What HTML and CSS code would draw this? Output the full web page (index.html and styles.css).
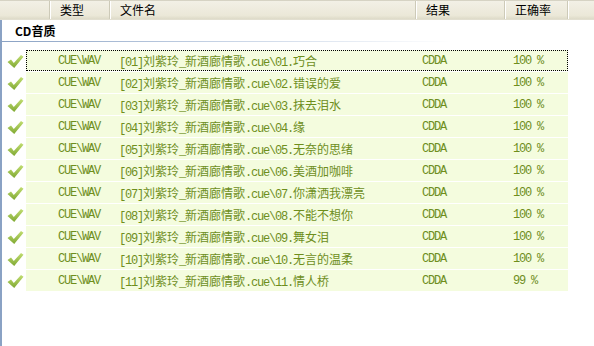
FILE: index.html
```html
<!DOCTYPE html>
<html>
  <head>
    <meta charset="utf-8">
    <title>CD音质</title>
    <link rel="stylesheet" href="styles.css">
  </head>
  <body>
    <svg class="defs" width="0" height="0"><defs><linearGradient id="g" x1="0" y1="0" x2="0" y2="1"><stop offset="0" stop-color="#c2de72"/><stop offset="1" stop-color="#7fa832"/></linearGradient></defs></svg>
    <div class="head">
      <div class="hcell hIcon"></div>
      <div class="hcell hType">类型</div>
      <div class="hcell hName">文件名</div>
      <div class="hcell hRes">结果</div>
      <div class="hcell hRate">正确率</div>
      <div class="hcell hRest"></div>
    </div>
    <div class="panel">
      <h3 class="groupName">CD音质</h3>
      <ul class="trackList">
        <li class="track focused">
          <span class="tick"><svg width="17" height="15" viewBox="0 0 17 15"><path d="M0.5 8 L4 5.6 L6.8 9 L14 1 L16.5 2.8 L7.2 14 Z" fill="url(#g)"/></svg></span>
          <div class="band"><span>CUE\WAV</span><span>[01]<i>刘紫玲</i>_<i>新酒廊情歌</i>.cue\01.<i>巧合</i></span><span>CDDA</span><span>100 %</span></div>
        </li>
        <li class="track">
          <span class="tick"><svg width="17" height="15" viewBox="0 0 17 15"><path d="M0.5 8 L4 5.6 L6.8 9 L14 1 L16.5 2.8 L7.2 14 Z" fill="url(#g)"/></svg></span>
          <div class="band"><span>CUE\WAV</span><span>[02]<i>刘紫玲</i>_<i>新酒廊情歌</i>.cue\02.<i>错误的爱</i></span><span>CDDA</span><span>100 %</span></div>
        </li>
        <li class="track">
          <span class="tick"><svg width="17" height="15" viewBox="0 0 17 15"><path d="M0.5 8 L4 5.6 L6.8 9 L14 1 L16.5 2.8 L7.2 14 Z" fill="url(#g)"/></svg></span>
          <div class="band"><span>CUE\WAV</span><span>[03]<i>刘紫玲</i>_<i>新酒廊情歌</i>.cue\03.<i>抹去泪水</i></span><span>CDDA</span><span>100 %</span></div>
        </li>
        <li class="track">
          <span class="tick"><svg width="17" height="15" viewBox="0 0 17 15"><path d="M0.5 8 L4 5.6 L6.8 9 L14 1 L16.5 2.8 L7.2 14 Z" fill="url(#g)"/></svg></span>
          <div class="band"><span>CUE\WAV</span><span>[04]<i>刘紫玲</i>_<i>新酒廊情歌</i>.cue\04.<i>缘</i></span><span>CDDA</span><span>100 %</span></div>
        </li>
        <li class="track">
          <span class="tick"><svg width="17" height="15" viewBox="0 0 17 15"><path d="M0.5 8 L4 5.6 L6.8 9 L14 1 L16.5 2.8 L7.2 14 Z" fill="url(#g)"/></svg></span>
          <div class="band"><span>CUE\WAV</span><span>[05]<i>刘紫玲</i>_<i>新酒廊情歌</i>.cue\05.<i>无奈的思绪</i></span><span>CDDA</span><span>100 %</span></div>
        </li>
        <li class="track">
          <span class="tick"><svg width="17" height="15" viewBox="0 0 17 15"><path d="M0.5 8 L4 5.6 L6.8 9 L14 1 L16.5 2.8 L7.2 14 Z" fill="url(#g)"/></svg></span>
          <div class="band"><span>CUE\WAV</span><span>[06]<i>刘紫玲</i>_<i>新酒廊情歌</i>.cue\06.<i>美酒加咖啡</i></span><span>CDDA</span><span>100 %</span></div>
        </li>
        <li class="track">
          <span class="tick"><svg width="17" height="15" viewBox="0 0 17 15"><path d="M0.5 8 L4 5.6 L6.8 9 L14 1 L16.5 2.8 L7.2 14 Z" fill="url(#g)"/></svg></span>
          <div class="band"><span>CUE\WAV</span><span>[07]<i>刘紫玲</i>_<i>新酒廊情歌</i>.cue\07.<i>你潇洒我漂亮</i></span><span>CDDA</span><span>100 %</span></div>
        </li>
        <li class="track">
          <span class="tick"><svg width="17" height="15" viewBox="0 0 17 15"><path d="M0.5 8 L4 5.6 L6.8 9 L14 1 L16.5 2.8 L7.2 14 Z" fill="url(#g)"/></svg></span>
          <div class="band"><span>CUE\WAV</span><span>[08]<i>刘紫玲</i>_<i>新酒廊情歌</i>.cue\08.<i>不能不想你</i></span><span>CDDA</span><span>100 %</span></div>
        </li>
        <li class="track">
          <span class="tick"><svg width="17" height="15" viewBox="0 0 17 15"><path d="M0.5 8 L4 5.6 L6.8 9 L14 1 L16.5 2.8 L7.2 14 Z" fill="url(#g)"/></svg></span>
          <div class="band"><span>CUE\WAV</span><span>[09]<i>刘紫玲</i>_<i>新酒廊情歌</i>.cue\09.<i>舞女泪</i></span><span>CDDA</span><span>100 %</span></div>
        </li>
        <li class="track">
          <span class="tick"><svg width="17" height="15" viewBox="0 0 17 15"><path d="M0.5 8 L4 5.6 L6.8 9 L14 1 L16.5 2.8 L7.2 14 Z" fill="url(#g)"/></svg></span>
          <div class="band"><span>CUE\WAV</span><span>[10]<i>刘紫玲</i>_<i>新酒廊情歌</i>.cue\10.<i>无言的温柔</i></span><span>CDDA</span><span>100 %</span></div>
        </li>
        <li class="track">
          <span class="tick"><svg width="17" height="15" viewBox="0 0 17 15"><path d="M0.5 8 L4 5.6 L6.8 9 L14 1 L16.5 2.8 L7.2 14 Z" fill="url(#g)"/></svg></span>
          <div class="band"><span>CUE\WAV</span><span>[11]<i>刘紫玲</i>_<i>新酒廊情歌</i>.cue\11.<i>情人桥</i></span><span>CDDA</span><span>99 %</span></div>
        </li>
      </ul>
    </div>
  </body>
</html>
```

FILE: styles.css
```css
html {
  height: 100%;
  background-color: #fff;
}
body {
  margin: 0;
  height: 100%;
  display: flex;
  flex-direction: column;
  font-family: 'Noto Sans CJK SC', sans-serif;
  font-size: 12px;
}
.defs {
  display: block;
  height: 0;
}
.head {
  display: flex;
  height: 20px;
  flex: none;
  box-sizing: border-box;
  background: linear-gradient(#f2f0e6, #ebe8d8 80%, #dedbc8);
  border-top: 1px solid #d6d3c4;
  border-bottom: 1px solid #e2dfd0;
}
.hcell {
  box-sizing: border-box;
  padding: 0 0 0 10px;
  line-height: 18px;
  color: #000;
  border-right: 1px solid #cdcab8;
  box-shadow: 1px 0 0 #fff;
}
.hIcon { width: 50px; }
.hType { width: 60px; }
.hName { width: 306px; }
.hRes { width: 89px; }
.hRate { width: 63px; }
.hRest { flex: 1; border-right: 0; box-shadow: none; }
.panel {
  flex: 1;
  border-left: 2px solid #8aa2c4;
}
.groupName {
  margin: 0 0 0 13px;
  padding: 4px 0 0 0;
  height: 15px;
  font-size: 12px;
  line-height: 14px;
  font-weight: bold;
  color: #000;
}
.groupName:after {
  content: '';
  display: block;
  height: 1px;
  margin: 3px 0 0 -13px;
  width: 450px;
  background: linear-gradient(to right, #8aa2c4, #c8d4e6 50%, #fff);
}
.trackList {
  list-style-type: none;
  margin: 0;
  padding: 11px 0 0 0;
}
.track {
  display: flex;
  align-items: center;
  height: 22px;
}
.tick {
  width: 24px;
  box-sizing: border-box;
  display: flex;
  justify-content: center;
  padding: 1px 0 0 2px;
}
.band {
  display: grid;
  grid-template-columns: 61px 303px 91px 1fr;
  align-items: center;
  width: 542px;
  height: 21px;
  margin: 0 0 1px 0;
  box-sizing: border-box;
  padding: 0 0 0 31px;
  background-color: #f4fcde;
  color: #6e8e1c;
  font-family: 'Liberation Mono', monospace;
  font-size: 12px;
  letter-spacing: -1.2px;
  white-space: nowrap;
  border: 1px solid transparent;
}
.band i {
  font-style: normal;
  font-family: 'Noto Sans CJK SC', sans-serif;
  font-size: 12px;
  letter-spacing: 0;
}
.focused .band {
  border: 1px dotted #000;
}
```
